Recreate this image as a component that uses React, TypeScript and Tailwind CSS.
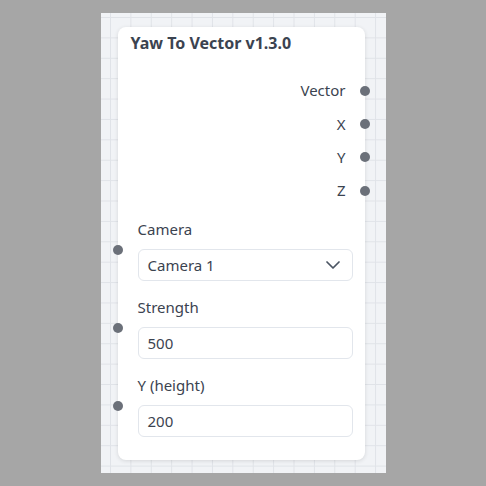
import React from "react";

const outputs = ["Vector", "X", "Y", "Z"];

function Dot({ className }: { className: string }) {
  return <span className={`absolute h-[10px] w-[10px] rounded-full bg-[#6b7079] ${className}`} />;
}

function Field({ label, children }: { label: string; children: React.ReactNode }) {
  return (
    <div className="relative flex flex-col">
      <Dot className="left-[-25px] top-1/2 -translate-y-1/2" />
      <div className="h-5 text-[15px] leading-5 text-[#3b4350]">{label}</div>
      <div className="mt-[10px] flex h-8 items-center rounded-md border border-[#e2e6ec] bg-white px-[9px] text-[15px] text-[#3b4350]">
        {children}
      </div>
    </div>
  );
}

export default function App() {
  return (
    <div
      className="flex h-[486px] w-[486px] items-center justify-center bg-[#a6a6a6]"
      style={{ fontFamily: '"Noto Sans", "Open Sans", sans-serif' }}
    >
      <div className="h-[460px] w-[285px] bg-[#f1f3f6] bg-[linear-gradient(to_right,#e0e3e8_1px,transparent_1px),linear-gradient(to_bottom,#e0e3e8_1px,transparent_1px)] bg-[size:20.4px_20.4px] bg-[position:9px_4px] pl-[17px] pt-[14px]">
        <div className="relative flex h-[433px] w-[247px] flex-col rounded-lg bg-white shadow-[0_1px_4px_rgba(0,0,0,0.12)]">
          <div className="pl-[13px] pt-[6px] text-[16px] font-bold leading-5 text-[#3b4350]">
            Yaw To Vector v1.3.0
          </div>
          <div className="mt-[21px] flex flex-col">
            {outputs.map((o) => (
              <div key={o} className="relative flex h-[33.3px] items-center justify-end pr-[19px] text-[15px] text-[#3b4350]">
                {o}
                <Dot className="right-[-5px] top-1/2 -translate-y-1/2" />
              </div>
            ))}
          </div>
          <div className="mt-[12px] flex flex-col gap-4 pl-5 pr-[12px]">
            <Field label="Camera">
              <span className="flex-1">Camera 1</span>
              <svg width="14" height="8" viewBox="0 0 14 8" fill="none" className="mr-[3px]">
                <path d="M1 1l6 6 6-6" stroke="#4b5563" strokeWidth="1.7" strokeLinecap="round" strokeLinejoin="round" />
              </svg>
            </Field>
            <Field label="Strength">500</Field>
            <Field label="Y (height)">200</Field>
          </div>
        </div>
      </div>
    </div>
  );
}
